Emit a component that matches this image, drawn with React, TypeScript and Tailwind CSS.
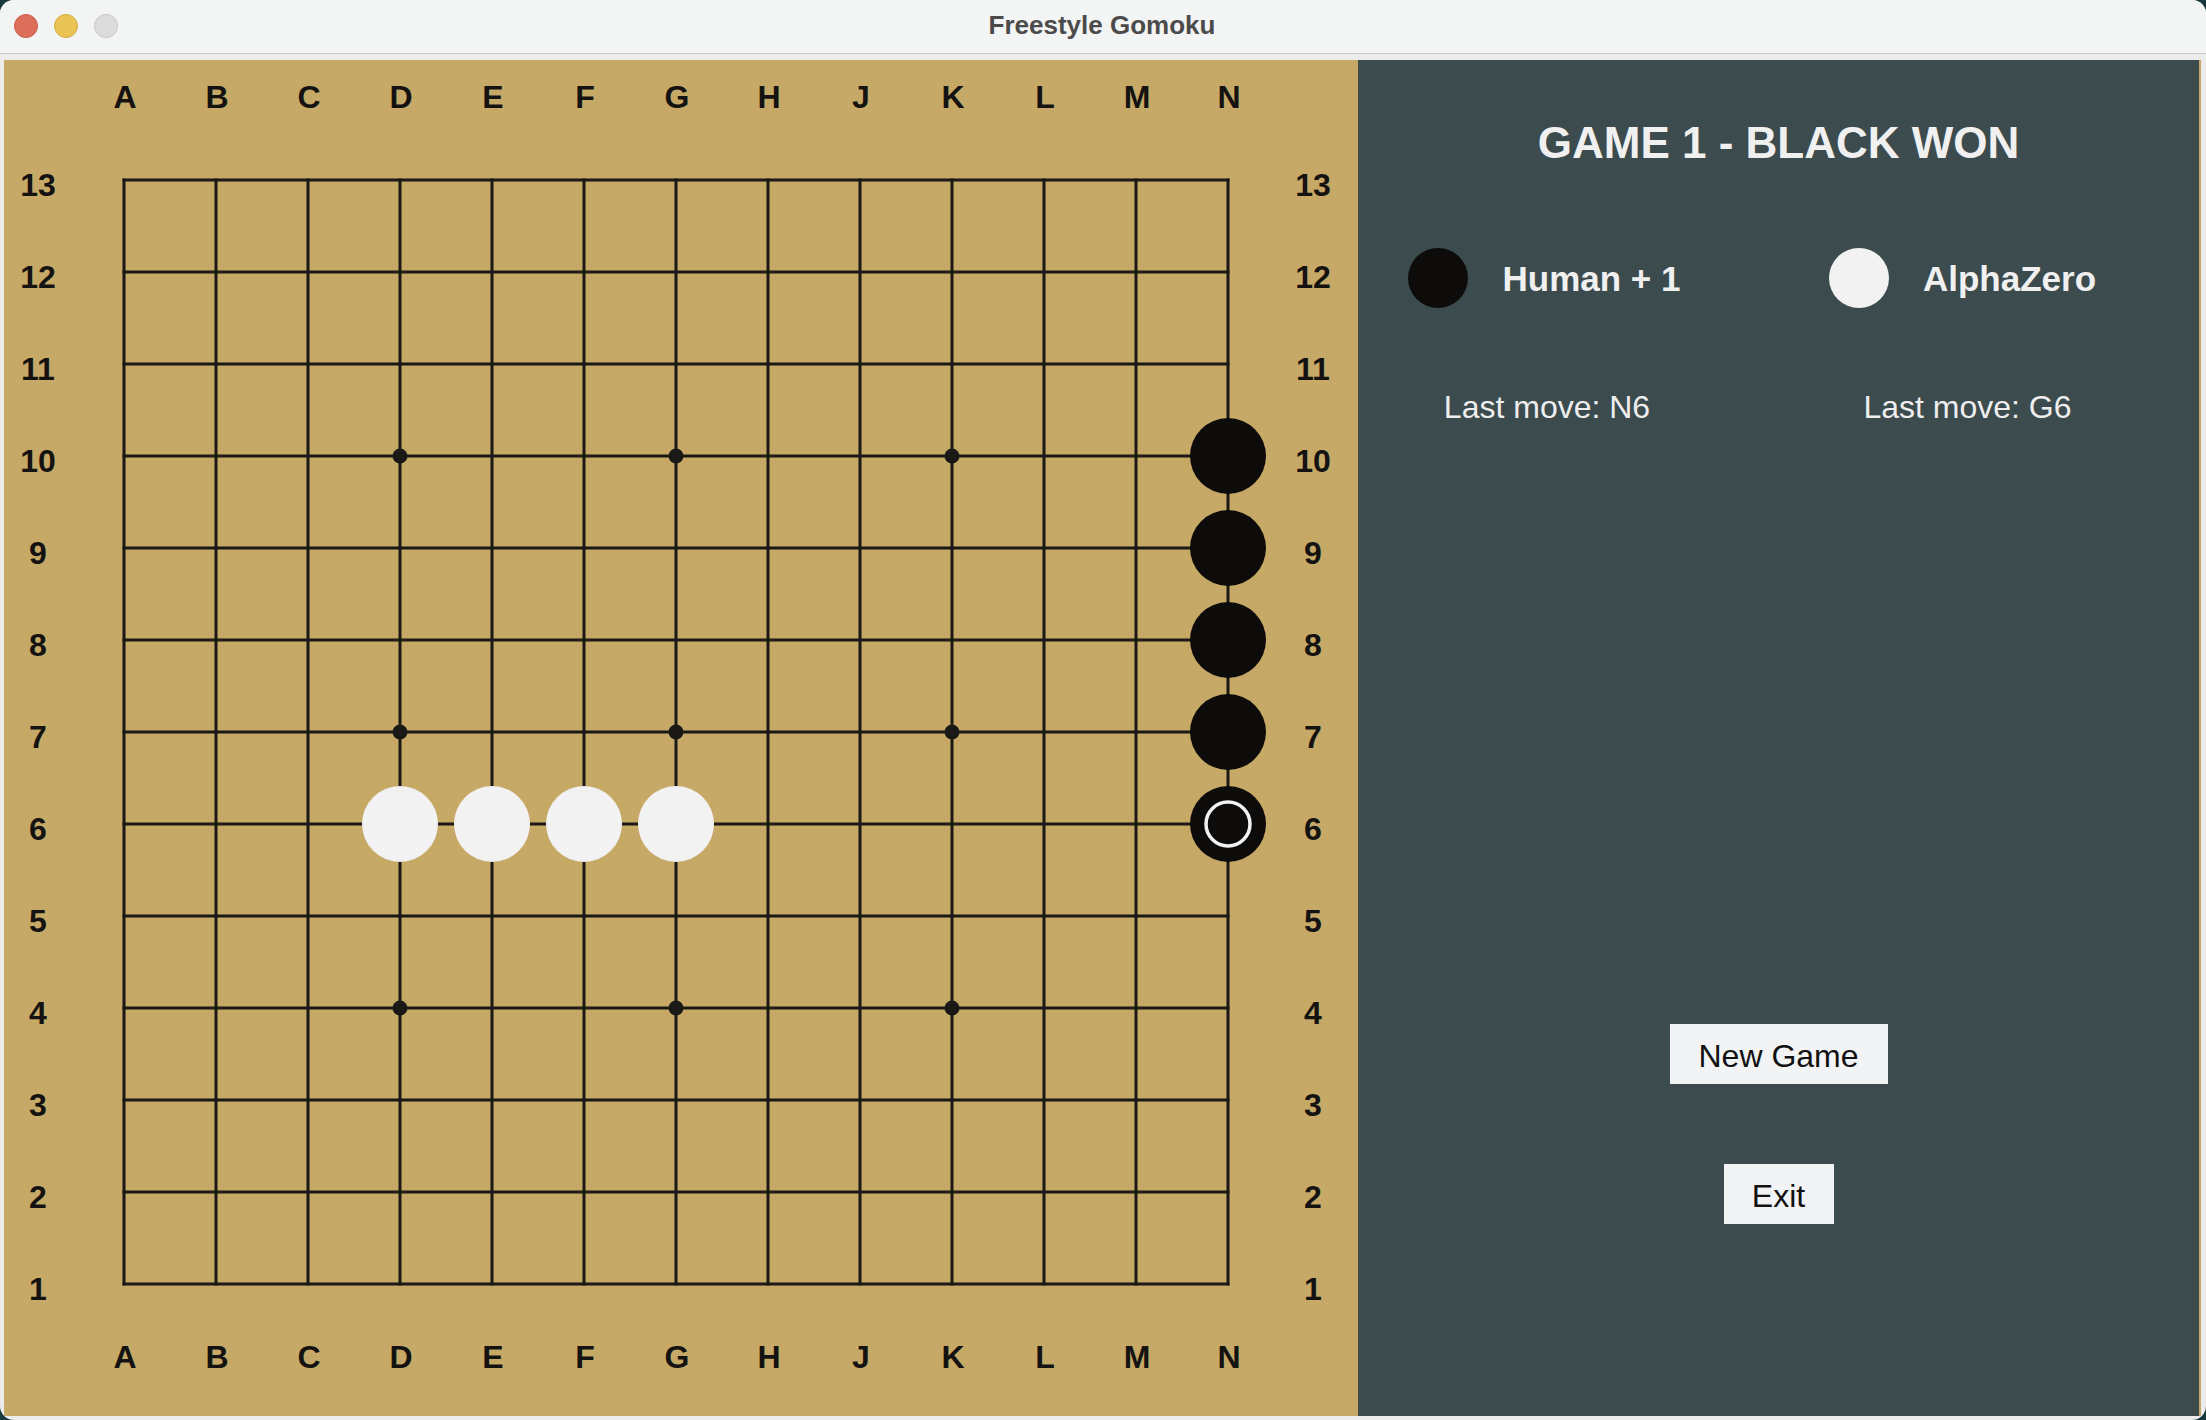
import React from 'react';

const COLS = ['A', 'B', 'C', 'D', 'E', 'F', 'G', 'H', 'J', 'K', 'L', 'M', 'N'];
const SIZE = 13;
const CELL = 92;
const ORIGIN = 120;

type Stone = { col: number; row: number; color: 'black' | 'white'; last?: boolean };

// row numbers as shown on the board (1 = bottom)
const stones: Stone[] = [
  { col: 3, row: 6, color: 'white' },
  { col: 4, row: 6, color: 'white' },
  { col: 5, row: 6, color: 'white' },
  { col: 6, row: 6, color: 'white' },
  { col: 12, row: 10, color: 'black' },
  { col: 12, row: 9, color: 'black' },
  { col: 12, row: 8, color: 'black' },
  { col: 12, row: 7, color: 'black' },
  { col: 12, row: 6, color: 'black', last: true },
];

const starPoints = [3, 6, 9].flatMap((c) => [10, 7, 4].map((r) => ({ c, r })));

const px = (c: number) => ORIGIN + c * CELL;
const py = (r: number) => ORIGIN + (SIZE - r) * CELL;

function Board() {
  const end = ORIGIN + (SIZE - 1) * CELL;
  const labelStyle = { fontFamily: '"Liberation Sans", Arial, sans-serif', fontWeight: 700, fontSize: 32 };

  return (
    <svg width={1354} height={1356} className="block">
      {/* grid */}
      {Array.from({ length: SIZE }).map((_, i) => (
        <g key={i} stroke="#1a1917" strokeWidth={3}>
          <line x1={ORIGIN} y1={ORIGIN + i * CELL} x2={end} y2={ORIGIN + i * CELL} strokeLinecap="square" />
          <line x1={ORIGIN + i * CELL} y1={ORIGIN} x2={ORIGIN + i * CELL} y2={end} strokeLinecap="square" />
        </g>
      ))}
      {starPoints.map(({ c, r }) => (
        <circle key={`${c}-${r}`} cx={px(c)} cy={py(r)} r={7.5} fill="#1a1917" />
      ))}

      {/* coordinates */}
      {COLS.map((l, i) => (
        <g key={l} fill="#141311" style={labelStyle}>
          <text x={px(i) + 1} y={48} textAnchor="middle">{l}</text>
          <text x={px(i) + 1} y={1308} textAnchor="middle">{l}</text>
        </g>
      ))}
      {Array.from({ length: SIZE }).map((_, i) => {
        const row = i + 1;
        return (
          <g key={row} fill="#141311" style={labelStyle}>
            <text x={34} y={py(row) + 15.5} textAnchor="middle">{row}</text>
            <text x={1309} y={py(row) + 15.5} textAnchor="middle">{row}</text>
          </g>
        );
      })}

      {/* stones */}
      {stones.map((s) => (
        <g key={`${s.col}-${s.row}`}>
          <circle cx={px(s.col)} cy={py(s.row)} r={38} fill={s.color === 'black' ? '#0e0c0a' : '#f2f2f2'} />
          {s.last && <circle cx={px(s.col)} cy={py(s.row)} r={22} fill="none" stroke="#f2f2f2" strokeWidth={3.5} />}
        </g>
      ))}
    </svg>
  );
}

function PlayerColumn({ stone, name, move, gap }: { stone: string; name: string; move: string; gap: string }) {
  return (
    <div className="flex flex-col items-center">
      <div className={`flex items-center h-[60px] ${gap}`}>
        <div className={`h-[60px] w-[60px] rounded-full ${stone}`} />
        <span className="text-[35px] font-bold leading-none text-[#f0f0f0]">{name}</span>
      </div>
      <div className="mt-[83px] text-[32px] leading-none text-[#eeeeee]">Last move: {move}</div>
    </div>
  );
}

export default function App() {
  return (
    <div className="w-[2206px] h-[1420px] bg-[#17393d] overflow-hidden" style={{ fontFamily: '"Liberation Sans", Arial, sans-serif' }}>
      <div className="h-full w-full rounded-[14px] overflow-hidden bg-[#ececec] flex flex-col">
        {/* title bar */}
        <div className="relative h-[54px] bg-[#f3f4f4] border-b border-[#c8c8c8] flex items-center justify-center pb-[3px] pr-[2px]">
          <div className="absolute left-[14px] top-[14px] flex gap-[16px]">
            <span className="h-[24px] w-[24px] rounded-full bg-[#de6e5c] border border-[#c85d4c]" />
            <span className="h-[24px] w-[24px] rounded-full bg-[#e9c354] border border-[#d4ac40]" />
            <span className="h-[24px] w-[24px] rounded-full bg-[#dcdcdc] border border-[#c4c4c4]" />
          </div>
          <span className="text-[26px] font-bold text-[#4b4b4b] leading-none">Freestyle Gomoku</span>
        </div>

        {/* content */}
        <div className="flex pt-[6px] pl-[4px] pr-[5px] pb-[4px] flex-1">
          <div className="w-[1354px] h-[1356px] bg-[#c6a966]">
            <Board />
          </div>

          <div className="w-[841px] h-[1356px] bg-[#3c4b4e] flex flex-col items-stretch">
            <h1 className="mt-[61px] text-center text-[44px] font-bold leading-none text-[#f0f0f0]">GAME 1 - BLACK WON</h1>

            <div className="mt-[83px] grid grid-cols-[378px_463px]">
              <PlayerColumn stone="bg-[#0e0c0a]" name="Human + 1" move="N6" gap="gap-[35px] mr-[6px]" />
              <PlayerColumn stone="bg-[#f2f2f2]" name="AlphaZero" move="G6" gap="gap-[34px] mr-[10px]" />
            </div>

            <div className="mt-[601px] flex flex-col items-center gap-[80px]">
              <button className="h-[60px] w-[218px] bg-[#f2f3f4] pt-[3px] text-[32px] leading-none text-[#111111]">New Game</button>
              <button className="h-[60px] w-[110px] bg-[#f2f3f4] pt-[3px] text-[32px] leading-none text-[#111111]">Exit</button>
            </div>
          </div>

          <div className="w-[2px] h-[1356px] bg-[#c6a966]" />
        </div>
      </div>
    </div>
  );
}
